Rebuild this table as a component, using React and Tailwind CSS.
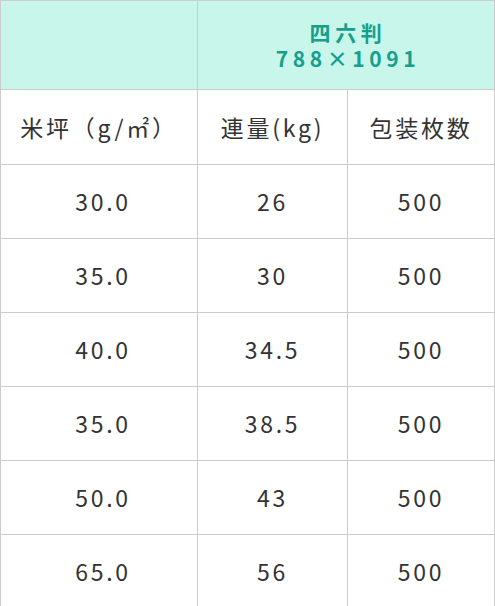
const rows = [
    ["30.0", "26", "500"],
    ["35.0", "30", "500"],
    ["40.0", "34.5", "500"],
    ["35.0", "38.5", "500"],
    ["50.0", "43", "500"],
    ["65.0", "56", "500"],
];

const cell = "border border-[#cccccc] text-center align-middle";

export default function App() {
    return (
        <div className="bg-white w-[495px] font-['Noto_Sans_CJK_JP','Noto_Sans',sans-serif] text-[#333333]">
            <table className="w-[494px] border-collapse table-fixed">
                <colgroup>
                    <col className="w-[197px]" />
                    <col className="w-[150px]" />
                    <col className="w-[147px]" />
                </colgroup>
                <thead>
                    <tr className="h-[89px] bg-[#c9f6eb]">
                        <th className={cell}></th>
                        <th colSpan={2} className={`${cell} text-[#16a08b] font-bold text-[21px] leading-[26px] tracking-[0.22em] pl-[4px]`}>
                            四六判
                            <br />
                            788×1091
                        </th>
                    </tr>
                </thead>
                <tbody className="text-[23px] tracking-[0.12em]">
                    <tr className="h-[75px]">
                        <td className={cell}>米坪（g/㎡）</td>
                        <td className={cell}>連量(kg)</td>
                        <td className={cell}>包装枚数</td>
                    </tr>
                    {rows.map((r, i) => (
                        <tr key={i} className="h-[74px]">
                            {r.map((v, j) => (
                                <td key={j} className={`${cell} ${j === 0 ? "pl-[8px]" : ""}`}>{v}</td>
                            ))}
                        </tr>
                    ))}
                </tbody>
            </table>
        </div>
    );
}
